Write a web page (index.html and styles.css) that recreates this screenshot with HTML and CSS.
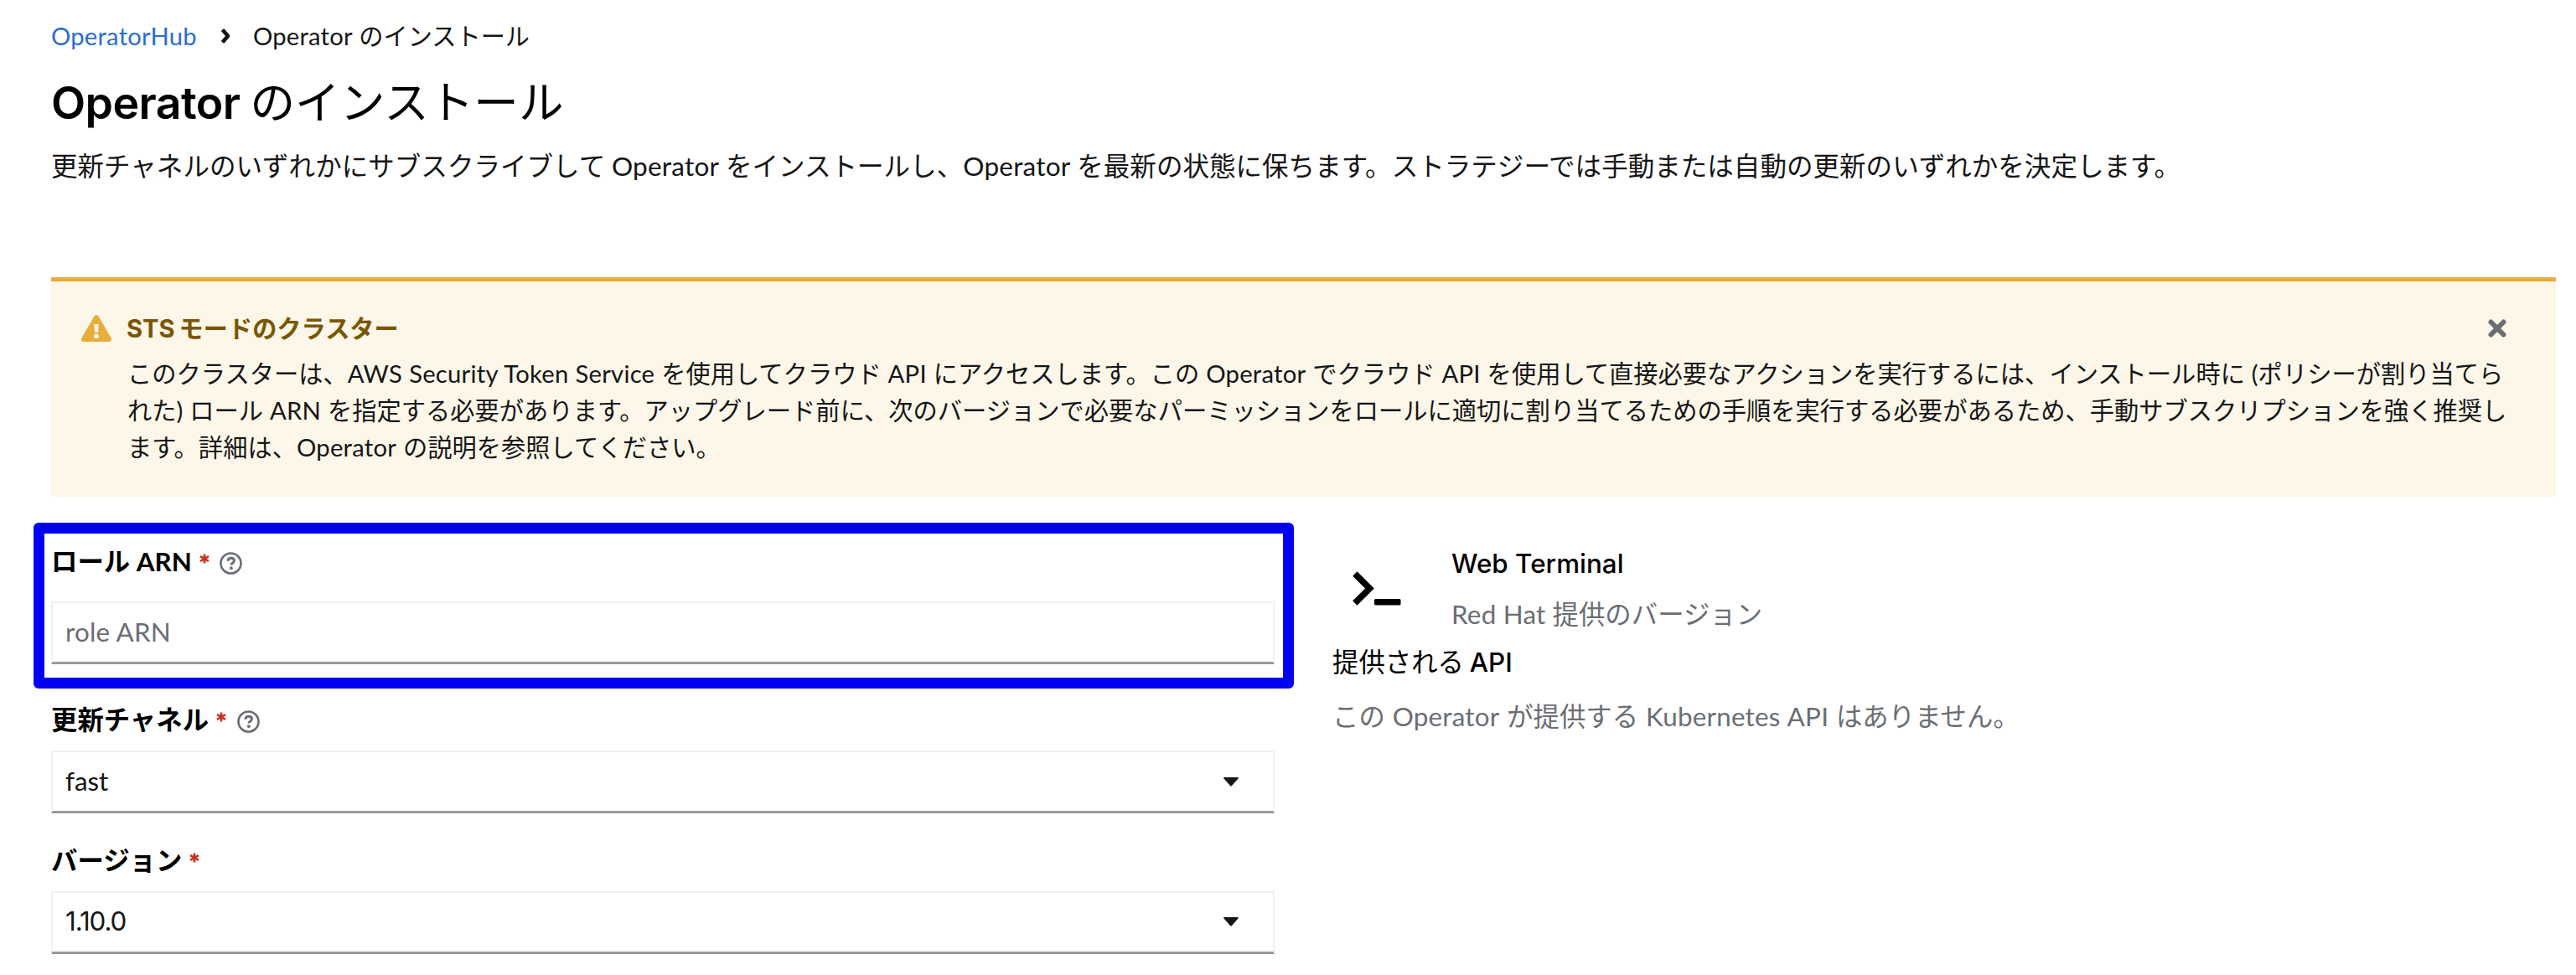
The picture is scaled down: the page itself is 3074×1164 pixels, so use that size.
FILE: index.html
```html
<!DOCTYPE html>
<html lang="ja">
<head>
<meta charset="utf-8">
<title>Operator のインストール</title>
<link rel="stylesheet" href="styles.css">
</head>
<body>
<nav class="breadcrumb">
  <a class="crumb-link lat" href="#">OperatorHub</a>
  <svg class="crumb-sep" viewBox="0 0 12 20"><path d="M2.5 2.5 9 10l-6.500 7.500" fill="none" stroke="currentColor" stroke-width="4.600" stroke-linejoin="round"/></svg>
  <span><span class="lat">Operator</span> のインストール</span>
</nav>
<h1 class="title"><span class="medium">Operator</span> のインストール</h1>
<p class="lead">更新チャネルのいずれかにサブスクライブして <span class="lat">Operator</span> をインストールし、<span class="lat">Operator</span> を最新の状態に保ちます。ストラテジーでは手動または自動の更新のいずれかを決定します。</p>

<section class="alert">
  <svg class="alert-icon" viewBox="0 0 36 32"><path d="M15.400 1.500a3 3 0 0 1 5.200 0l15 26a3 3 0 0 1-2.600 4.500H3a3 3 0 0 1-2.600-4.500z" fill="#e8ae3c"/><path d="M15.300 11h5.400l-.6 9.700h-4.200z" fill="#fdf7e9"/><circle cx="18" cy="25.300" r="2.800" fill="#fdf7e9"/></svg>
  <div class="alert-main">
    <h2 class="alert-title">STS モードのクラスター</h2>
    <p class="alert-text">このクラスターは、<span class="lat">AWS Security Token Service</span> を使用してクラウド <span class="lat">API</span> にアクセスします。この <span class="lat">Operator</span> でクラウド <span class="lat">API</span> を使用して直接必要なアクションを実行するには、インストール時に (ポリシーが割り当てら<br>れた) ロール <span class="lat">ARN</span> を指定する必要があります。アップグレード前に、次のバージョンで必要なパーミッションをロールに適切に割り当てるための手順を実行する必要があるため、手動サブスクリプションを強く推奨し<br>ます。詳細は、<span class="lat">Operator</span> の説明を参照してください。</p>
  </div>
  <svg class="alert-close" viewBox="0 0 22 22"><path d="M3.500 3.500l15 15M18.500 3.500l-15 15" stroke="#6a6e73" stroke-width="6" stroke-linecap="round"/></svg>
</section>

<main class="columns">
  <form class="form">
    <div class="field field-role">
      <div class="label">ロール ARN<svg class="req" viewBox="0 0 12 12"><path d="M6 .5v11M1 3.200l10 5.600M11 3.200 1 8.800" stroke="#c9301c" stroke-width="2.600"/></svg><svg class="help" viewBox="0 0 27 27"><circle cx="13.500" cy="13.500" r="12" fill="none" stroke="#6a6e73" stroke-width="2.600"/><path d="M9.800 10.800c.3-2.500 1.900-3.600 3.900-3.600 2.200 0 3.800 1.200 3.800 3.100 0 2.600-3.500 2.700-3.500 5.200" fill="none" stroke="#6a6e73" stroke-width="3"/><circle cx="13.900" cy="19.200" r="1.900" fill="#6a6e73"/></svg></div>
      <div class="control placeholder">role ARN</div>
    </div>
    <div class="field">
      <div class="label">更新チャネル<svg class="req" viewBox="0 0 12 12"><path d="M6 .5v11M1 3.200l10 5.600M11 3.200 1 8.800" stroke="#c9301c" stroke-width="2.600"/></svg><svg class="help" viewBox="0 0 27 27"><circle cx="13.500" cy="13.500" r="12" fill="none" stroke="#6a6e73" stroke-width="2.600"/><path d="M9.800 10.800c.3-2.500 1.900-3.600 3.900-3.600 2.200 0 3.800 1.200 3.800 3.100 0 2.600-3.500 2.700-3.500 5.200" fill="none" stroke="#6a6e73" stroke-width="3"/><circle cx="13.900" cy="19.200" r="1.900" fill="#6a6e73"/></svg></div>
      <div class="control">fast<svg class="caret" viewBox="0 0 18 11"><path d="M1 0h16q1.400.4.500 1.500L10 10q-1 1-2 0L.5 1.500Q-.4.400 1 0z" fill="#151515"/></svg></div>
    </div>
    <div class="field">
      <div class="label">バージョン<svg class="req" viewBox="0 0 12 12"><path d="M6 .5v11M1 3.200l10 5.600M11 3.200 1 8.800" stroke="#c9301c" stroke-width="2.600"/></svg></div>
      <div class="control version">1.10.0<svg class="caret" viewBox="0 0 18 11"><path d="M1 0h16q1.400.4.500 1.500L10 10q-1 1-2 0L.5 1.500Q-.4.400 1 0z" fill="#151515"/></svg></div>
    </div>
  </form>
  <aside class="info">
    <div class="operator">
      <svg class="terminal" viewBox="0 0 58 41"><path d="M2.800 3 20.500 20.500 2.800 38" fill="none" stroke="#000" stroke-width="7.500"/><rect x="26" y="33" width="31.500" height="7.500" rx="1.500"/></svg>
      <div>
        <div class="strong medium">Web Terminal</div>
        <div class="muted provider"><span class="lat">Red Hat</span> 提供のバージョン</div>
      </div>
    </div>
    <div class="strong apis">提供される <span class="medium">API</span></div>
    <div class="muted none">この <span class="lat">Operator</span> が提供する <span class="lat">Kubernetes API</span> はありません。</div>
  </aside>
</main>
</body>
</html>
```
FILE: styles.css
```css
* { box-sizing: border-box; }
body {
  margin: 0;
  padding: 21px 24px 0 61px;
  background: #fff;
  color: #151515;
  font: 400 31.400px/47px Lato, "Noto Sans CJK JP", sans-serif;
  font-kerning: normal;
  white-space: nowrap;
  overflow: hidden;
}
h1, h2, p { margin: 0; font-weight: 400; }
svg { display: block; flex: none; overflow: visible; }
.lat { letter-spacing: .22px; }
.medium { font-weight: 500; }

.breadcrumb { display: flex; align-items: center; height: 44px; font-size: 29.200px; line-height: 44px; }
.crumb-link { color: #2b6cd4; text-decoration: none; }
.crumb-sep { width: 12px; height: 20px; margin: 0 27px 0 28px; }
.title { margin-top: 23px; font: 400 53.600px/70px Inter, "Noto Sans CJK JP", sans-serif; color: #000; word-spacing: -3px; }
.title .medium { font-weight: 600; letter-spacing: -.6px; }
.lead { margin-top: 17px; font-size: 31.560px; word-spacing: -.4px; }

.alert { display: flex; height: 262px; margin-top: 109px; padding: 35px 59px 0 36px; border-top: 5px solid #e8ae3c; background: #fdf7e9; }
.alert-icon { width: 36px; height: 32px; margin: 5px 18px 0 0; }
.alert-main { flex: 1; min-width: 0; }
.alert-title { font: 700 29.200px/44px Inter, "Noto Sans CJK JP", sans-serif; color: #795600; word-spacing: -2px; }
.alert-text { margin-top: 9px; padding-left: 1px; font-size: 29.270px; line-height: 44.200px; word-spacing: .4px; }
.alert-close { width: 22px; height: 22px; margin-top: 10px; }

.columns { display: flex; padding-top: 54px; }
.form { width: 1460px; margin-right: 69px; }
.field { position: relative; margin-bottom: 32.500px; }
.field-role { margin-bottom: 43px; }
.field-role::after { content: ""; position: absolute; inset: -23px -23px -29px -21.500px; border: 13px solid #0000f5; border-radius: 6px; }
.label { display: flex; align-items: center; height: 47px; margin-bottom: 13px; font-weight: 700; color: #000; }
.field-role .label { margin-bottom: 24px; }
.req { width: 12px; height: 12px; margin: -7px 0 0 9px; }
.help { width: 27px; height: 27px; margin: 4px 0 0 12.500px; }
.control { display: flex; align-items: center; justify-content: space-between; height: 75px; padding: 0 41px 1px 15px; border: 2px solid #f0f0f0; border-bottom: 3px solid #97999b; }
.placeholder { color: #6a6e73; letter-spacing: .2px; }
.version { font-family: Inter, sans-serif; letter-spacing: -1.100px; }
.caret { width: 18px; height: 11px; margin-top: 1px; }

.info { padding-top: 3px; }
.operator { display: flex; }
.terminal { width: 58px; height: 41px; margin: 31.500px 60px 0 24px; }
.strong { font-family: Inter, "Noto Sans CJK JP", sans-serif; color: #000; }
.muted { color: #6a6e73; }
.provider { margin-top: 12.500px; }
.apis { margin-top: 11px; word-spacing: -2px; }
.none { margin-top: 17px; word-spacing: .8px; }
```
